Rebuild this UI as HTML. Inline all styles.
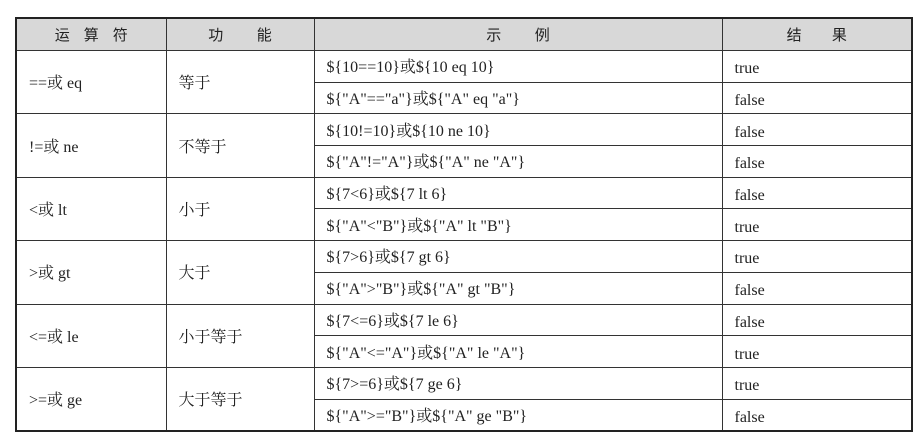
<!DOCTYPE html>
<html><head><meta charset="utf-8"><style>
html,body{margin:0;padding:0;background:#fff;width:914px;height:448px;overflow:hidden}
table{position:absolute;left:15px;top:17px;width:896px;border-collapse:collapse;border:2px solid #222;font-family:"Liberation Serif","Noto Serif CJK SC",serif;font-size:16px;color:#222;table-layout:fixed}
td,th{border:1px solid #333;padding:4px 0 0 12px;height:26.7px;text-align:left;white-space:nowrap;vertical-align:middle;line-height:18px}
td span{display:inline-block;line-height:18px}
td.r span{position:relative;top:1px}
th{background:#d8d8d8;font-weight:normal;text-align:center;padding:0;height:31px;font-family:"Noto Sans CJK SC",sans-serif;font-size:15px}
.h1{letter-spacing:14px;padding-left:14px}
</style></head><body>
<table>
<colgroup><col style="width:150px"><col style="width:148px"><col style="width:408px"><col style="width:190px"></colgroup>
<tr><th class="h1">运算符</th><th>功&nbsp;&nbsp;&nbsp;&nbsp;&nbsp;&nbsp;&nbsp;&nbsp;&nbsp;&nbsp;能</th><th>示&nbsp;&nbsp;&nbsp;&nbsp;&nbsp;&nbsp;&nbsp;&nbsp;&nbsp;&nbsp;例</th><th>结&nbsp;&nbsp;&nbsp;&nbsp;&nbsp;&nbsp;&nbsp;&nbsp;&nbsp;果</th></tr>
<tr><td rowspan="2">==或 eq</td><td rowspan="2">等于</td><td>${10==10}或${10 eq 10}</td><td class="r"><span>true</span></td></tr>
<tr><td>${"A"=="a"}或${"A" eq "a"}</td><td class="r"><span>false</span></td></tr>
<tr><td rowspan="2">!=或 ne</td><td rowspan="2">不等于</td><td>${10!=10}或${10 ne 10}</td><td class="r"><span>false</span></td></tr>
<tr><td>${"A"!="A"}或${"A" ne "A"}</td><td class="r"><span>false</span></td></tr>
<tr><td rowspan="2">&lt;或 lt</td><td rowspan="2">小于</td><td>${7&lt;6}或${7 lt 6}</td><td class="r"><span>false</span></td></tr>
<tr><td>${"A"&lt;"B"}或${"A" lt "B"}</td><td class="r"><span>true</span></td></tr>
<tr><td rowspan="2">&gt;或 gt</td><td rowspan="2">大于</td><td>${7&gt;6}或${7 gt 6}</td><td class="r"><span>true</span></td></tr>
<tr><td>${"A"&gt;"B"}或${"A" gt "B"}</td><td class="r"><span>false</span></td></tr>
<tr><td rowspan="2">&lt;=或 le</td><td rowspan="2">小于等于</td><td>${7&lt;=6}或${7 le 6}</td><td class="r"><span>false</span></td></tr>
<tr><td>${"A"&lt;="A"}或${"A" le "A"}</td><td class="r"><span>true</span></td></tr>
<tr><td rowspan="2">&gt;=或 ge</td><td rowspan="2">大于等于</td><td>${7&gt;=6}或${7 ge 6}</td><td class="r"><span>true</span></td></tr>
<tr><td>${"A"&gt;="B"}或${"A" ge "B"}</td><td class="r"><span>false</span></td></tr>
</table>
</body></html>
